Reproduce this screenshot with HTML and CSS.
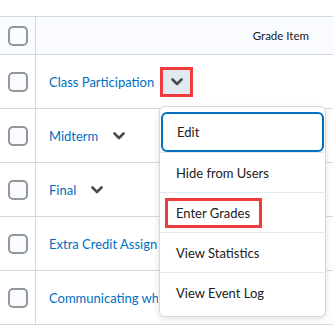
FILE: index.html
```html
<!DOCTYPE html>
<html lang="en">
<head>
  <meta charset="UTF-8">
  <title>Grades</title>
  <link rel="stylesheet" href="styles.css">
</head>
<body>

  <div class="grid">
    <div class="row head">
      <div class="check"><span class="box"></span></div>
      <div class="cell head-cell">Grade Item</div>
    </div>

    <div class="row">
      <div class="check"><span class="box"></span></div>
      <div class="cell">
        <a class="item-link" href="#">Class Participation</a>
        <button class="chev open"><svg width="12" height="8" viewBox="0 0 12 8"><path d="M1.5 1.5 L6 6 L10.5 1.5" fill="none" stroke="#494c4e" stroke-width="2.6" stroke-linecap="round" stroke-linejoin="round"/></svg></button>
      </div>
    </div>

    <div class="row">
      <div class="check"><span class="box"></span></div>
      <div class="cell">
        <a class="item-link" href="#">Midterm</a>
        <button class="chev"><svg width="12" height="8" viewBox="0 0 12 8"><path d="M1.5 1.5 L6 6 L10.5 1.5" fill="none" stroke="#494c4e" stroke-width="2.6" stroke-linecap="round" stroke-linejoin="round"/></svg></button>
      </div>
    </div>

    <div class="row">
      <div class="check"><span class="box"></span></div>
      <div class="cell">
        <a class="item-link" href="#">Final</a>
        <button class="chev"><svg width="12" height="8" viewBox="0 0 12 8"><path d="M1.5 1.5 L6 6 L10.5 1.5" fill="none" stroke="#494c4e" stroke-width="2.6" stroke-linecap="round" stroke-linejoin="round"/></svg></button>
      </div>
    </div>

    <div class="row">
      <div class="check"><span class="box"></span></div>
      <div class="cell">
        <a class="item-link hidden-under" href="#">Extra Credit Assign</a>
      </div>
    </div>

    <div class="row">
      <div class="check"><span class="box"></span></div>
      <div class="cell">
        <a class="item-link hidden-under" href="#">Communicating wh</a>
      </div>
    </div>
  </div>

  <!-- dropdown for Class Participation -->
  <div class="menu">
    <div class="menu-item focused">Edit</div>
    <div class="menu-item">Hide from Users</div>
    <div class="menu-item"><span class="marked">Enter Grades</span></div>
    <div class="menu-item">View Statistics</div>
    <div class="menu-item">View Event Log</div>
  </div>

</body>
</html>
```

FILE: styles.css
```css
body {
  margin: 0;
  padding-top: 16px;
  background: #ffffff;
  font-family: 'Lato', sans-serif;
  color: #202122;
  position: relative;
  overflow: hidden;
}

.grid {
  border-top: 1px solid #d3d9e3;
}

.row {
  display: flex;
  height: 53px;
  border-bottom: 1px solid #d3d9e3;
}
.row.head {
  height: 37px;
  background: #f9fbff;
}

.check {
  width: 35px;
  border-right: 1px solid #d3d9e3;
  display: flex;
  align-items: center;
  justify-content: center;
}
.box {
  width: 16px;
  height: 16px;
  border: 2px solid #90989d;
  border-radius: 5px;
  background: #f9fbff;
  margin-left: 1px;
}

.cell {
  flex: 1;
  display: flex;
  align-items: center;
  padding-left: 13px;
  white-space: nowrap;
  overflow: hidden;
}
.head-cell {
  justify-content: flex-end;
  padding-right: 24px;
  font-size: 11.5px;
  color: #202122;
}

.item-link {
  color: #006fbf;
  text-decoration: none;
  font-size: 13px;
}
/* the open menu covers the rest of these names */
.hidden-under {
  display: inline-block;
  max-width: 109px;
  overflow: hidden;
}

.chev {
  width: 27px;
  height: 24px;
  margin-left: 7px;
  border: none;
  border-radius: 3px;
  background: transparent;
  display: flex;
  align-items: center;
  justify-content: center;
  padding: 0;
}
.chev.open {
  margin-left: 9px;
  background: #e3e9f1;
  outline: 3px solid #ef3b3b;
  outline-offset: 0;
  border-radius: 0;
}

.menu {
  position: absolute;
  left: 159px;
  top: 106px;
  width: 165px;
  padding: 5px 0 4px;
  background: #ffffff;
  border: 1px solid #d3d9e3;
  border-radius: 6px;
  box-shadow: 0 2px 6px rgba(0, 0, 0, 0.12);
}

.menu-item {
  height: 40px;
  display: flex;
  align-items: center;
  padding-left: 16px;
  font-size: 13px;
  border-top: 1px solid #e3e9f1;
  box-sizing: border-box;
}
.menu-item:first-child {
  border-top: none;
}
.menu-item.focused {
  margin: 0 1px;
  padding-left: 14px;
  border: 2px solid #006fbf;
  border-radius: 6px;
}

.marked {
  margin-left: -11px;
  padding: 4px 9px 4px 8px;
  border: 3px solid #ef3b3b;
}
```
